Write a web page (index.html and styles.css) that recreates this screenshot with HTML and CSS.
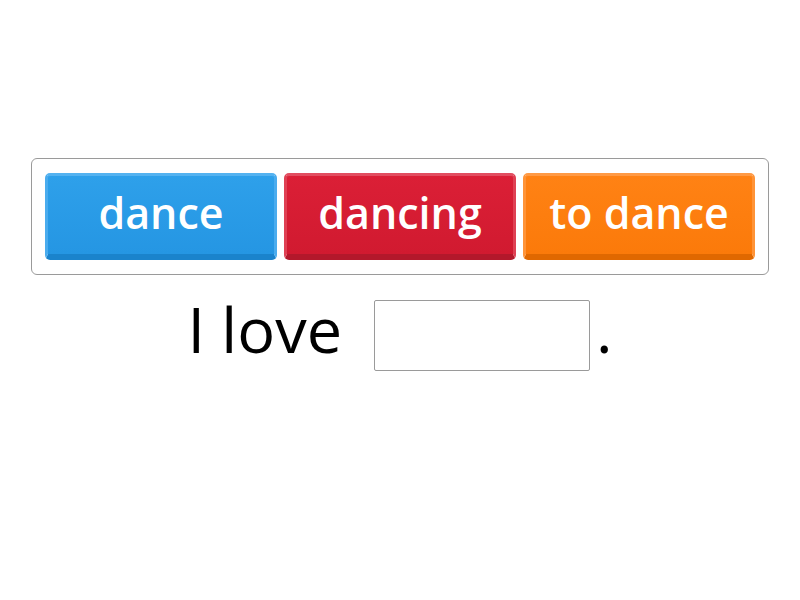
FILE: index.html
```html
<!DOCTYPE html>
<html>
<head>
<meta charset="utf-8">
<link rel="stylesheet" href="styles.css">
</head>
<body>
<div class="page">
  <div class="bank">
    <div class="tile tile-blue">dance</div>
    <div class="tile tile-red">dancing</div>
    <div class="tile tile-orange">to dance</div>
  </div>
  <div class="sentence">
    <span class="word">I love</span>
    <span class="blank"></span>
    <span class="dot">.</span>
  </div>
</div>
</body>
</html>
```

FILE: styles.css
```css
html, body {
  margin: 0;
  padding: 0;
  background: #ffffff;
}
.page {
  width: 800px;
  height: 600px;
  padding-top: 158px;
  box-sizing: border-box;
  font-family: "Open Sans", "Liberation Sans", sans-serif;
}
.bank {
  width: 738px;
  height: 117px;
  margin: 0 auto;
  box-sizing: border-box;
  border: 1px solid #9a9a9a;
  border-radius: 6px;
  padding: 14px 13px 13px 13px;
  display: flex;
  gap: 7px;
}
.tile {
  flex: 1;
  height: 87px;
  box-sizing: border-box;
  border-radius: 5px;
  border-style: solid;
  border-width: 3px 3px 6px 3px;
  display: flex;
  align-items: center;
  justify-content: center;
  color: #ffffff;
  font-weight: 600;
  font-size: 43px;
  line-height: 1;
  padding-bottom: 6px;
}
.tile-blue {
  background: linear-gradient(#2ea0ea, #2596e3);
  border-color: #54b2f0 #4aacee #1a83cc #4aacee;
}
.tile-red {
  background: linear-gradient(#db1f36, #d11a30);
  border-color: #e24d60 #df4154 #b3182b #df4154;
}
.tile-orange {
  background: linear-gradient(#ff8214, #fb7a0a);
  border-color: #ff9a45 #ff9438 #e06800 #ff9438;
}
.sentence {
  display: flex;
  justify-content: center;
  align-items: center;
  margin-top: 22px;
  color: #000000;
  font-size: 63px;
}
.word {
  line-height: 1;
  margin-right: 32px;
  margin-bottom: 14px;
}
.blank {
  display: block;
  width: 216px;
  height: 71px;
  box-sizing: border-box;
  border: 1px solid #9a9a9a;
  border-radius: 2px;
  background: #ffffff;
}
.dot {
  line-height: 1;
  margin-left: 6px;
  margin-bottom: 14px;
}
```
